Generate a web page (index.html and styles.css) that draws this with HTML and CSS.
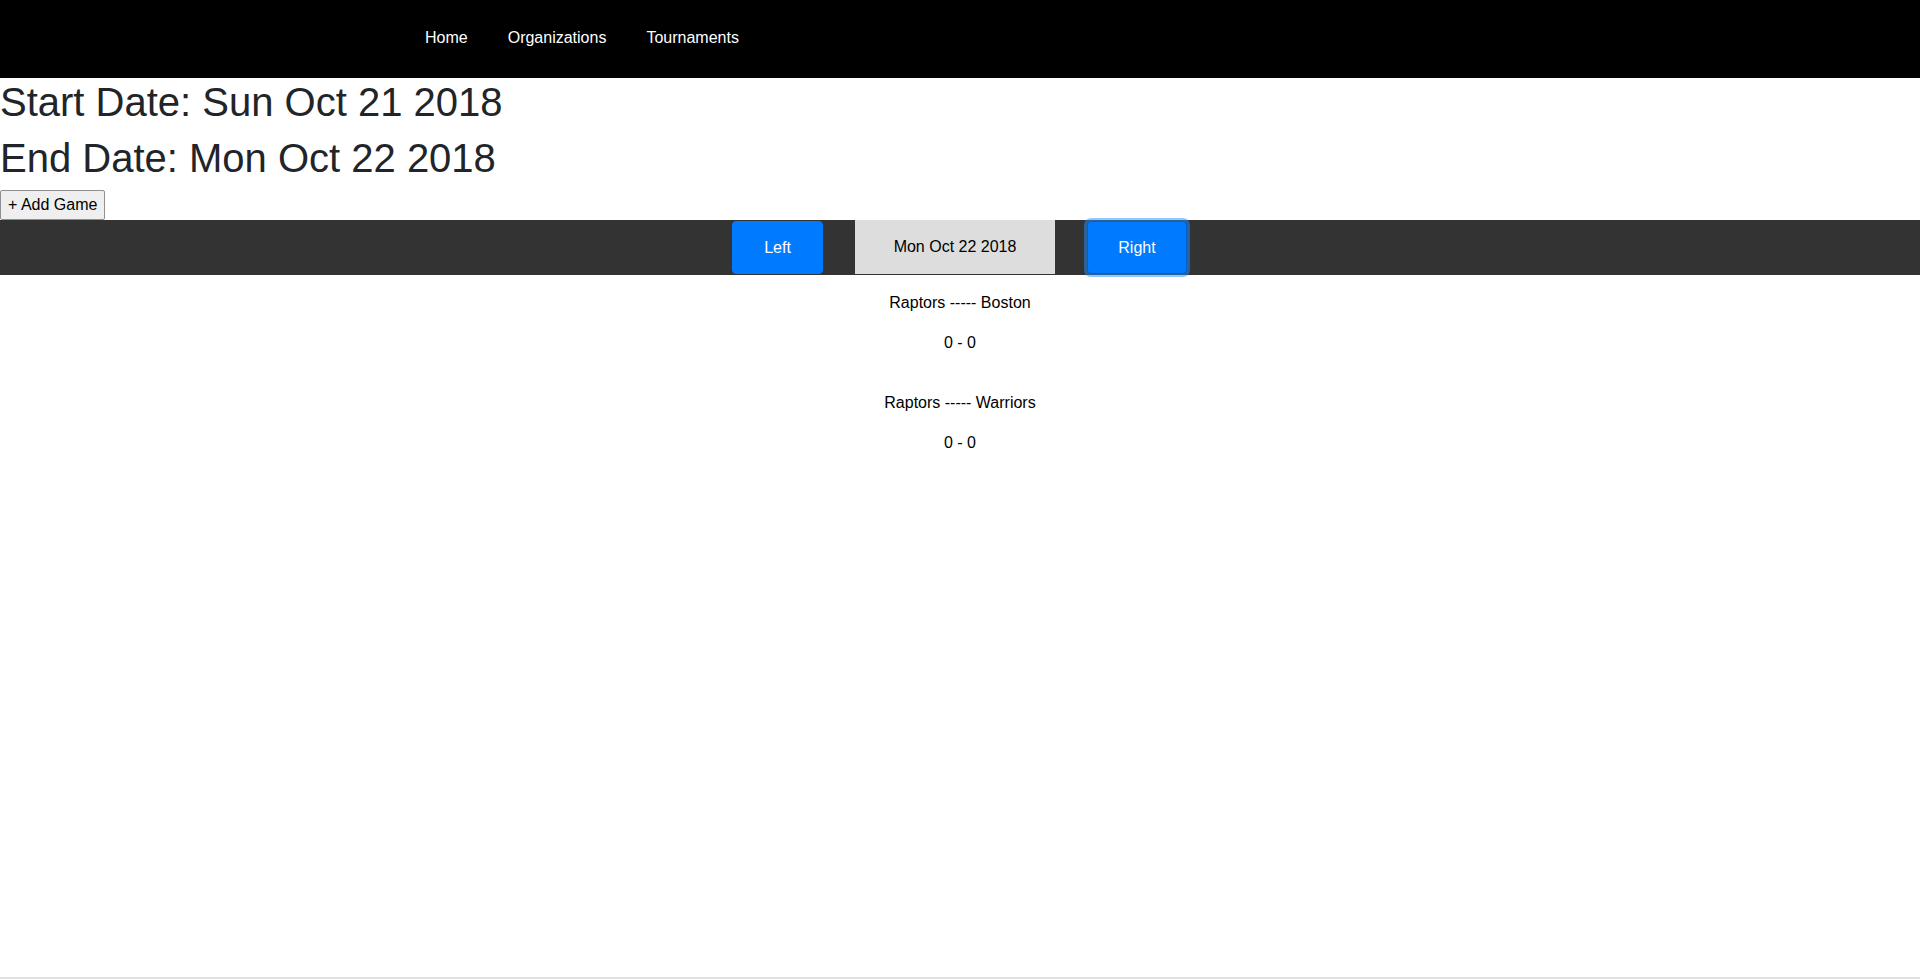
FILE: index.html
```html
<!DOCTYPE html>
<html lang="en">
<head>
<meta charset="utf-8">
<title>Tournament</title>
<link rel="stylesheet" href="styles.css">
</head>
<body>
<nav class="navbar">
  <div class="nav-container">
    <a class="nav-link" href="#">Home</a>
    <a class="nav-link" href="#">Organizations</a>
    <a class="nav-link" href="#">Tournaments</a>
  </div>
</nav>
<h1 class="date-title">Start Date: Sun Oct 21 2018</h1>
<h1 class="date-title">End Date: Mon Oct 22 2018</h1>
<div class="add-row"><button class="add-btn" type="button">+ Add Game</button></div>
<div class="day-bar">
  <button class="btn-primary btn-left" type="button">Left</button>
  <div class="day-box">Mon Oct 22 2018</div>
  <button class="btn-primary btn-right focused" type="button">Right</button>
</div>
<div class="games">
  <div class="game">
    <p>Raptors ----- Boston</p>
    <p>0 - 0</p>
  </div>
  <div class="game">
    <p>Raptors ----- Warriors</p>
    <p>0 - 0</p>
  </div>
</div>
<div class="bottom-line"></div>
</body>
</html>
```
FILE: styles.css
```css
* { box-sizing: border-box; }
html, body { height: 100%; }
body {
  margin: 0;
  font-family: "Liberation Sans", Arial, sans-serif;
  font-size: 16px;
  line-height: 1.5;
  color: #212529;
  background: #fff;
}
.navbar {
  background: #000;
  height: 78px;
  display: flex;
  align-items: center;
}
.nav-container {
  width: 1140px;
  margin: 0 auto;
  padding: 0 15px;
  display: flex;
  margin-top: -3px;
}
.nav-link {
  color: #fff;
  text-decoration: none;
  padding: 0 20px;
  line-height: 24px;
}
.date-title {
  margin: 0 0 8px;
  font-size: 40px;
  font-weight: 500;
  line-height: 1.2;
  color: #212529;
}
.add-row { line-height: 1.5; }
.add-btn {
  font-family: inherit;
  font-size: 16px;
  line-height: 24px;
  color: #000;
  background: #efefef;
  border: 1px solid #8f8f8f;
  border-radius: 2px;
  padding: 2px 7px 2px;
  margin: 0;
  vertical-align: top;
}
.day-bar {
  background: #333;
  height: 55px;
  display: flex;
  justify-content: center;
  align-items: flex-start;
  padding-right: 1px;
}
.btn-primary {
  font-family: inherit;
  font-size: 16px;
  line-height: 24px;
  color: #fff;
  background: #007bff;
  border: 1px solid #007bff;
  border-radius: 4px;
  height: 53px;
  margin-top: 1px;
  padding: 0;
}
.btn-left { width: 91px; }
.btn-right { width: 100px; }
.btn-right.focused {
  border-color: #0062cc;
  box-shadow: 0 0 0 3px rgba(38, 143, 255, 0.5);
}
.day-box {
  width: 200px;
  height: 54px;
  background: #ddd;
  color: #000;
  margin: 0 32px 0 32px;
  display: flex;
  align-items: center;
  justify-content: center;
}
.games {
  padding-top: 16px;
  text-align: center;
  color: #000;
}
.game { padding-bottom: 20px; }
.game p { margin: 0 0 16px; }
.bottom-line {
  position: fixed;
  left: 0;
  right: 0;
  bottom: 0;
  height: 2px;
  background: #e0e0e0;
}
```
